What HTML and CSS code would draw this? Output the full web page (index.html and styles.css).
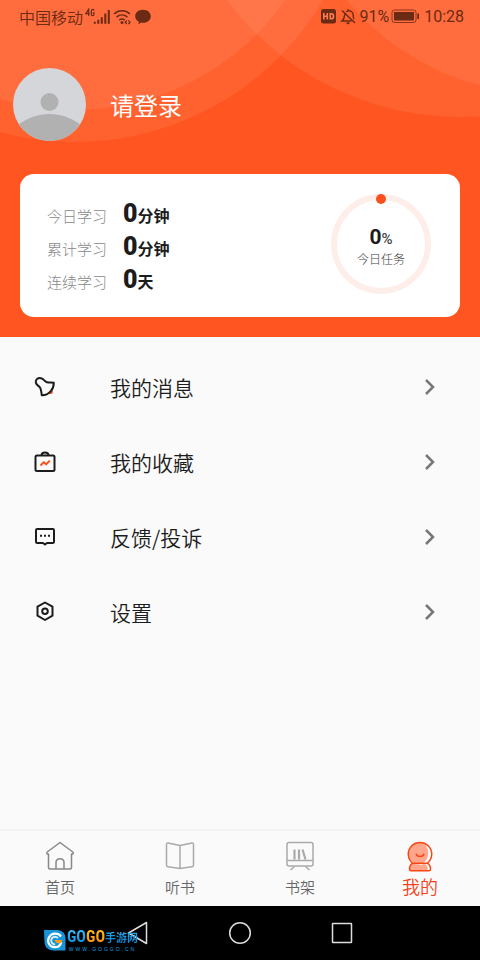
FILE: index.html
```html
<!DOCTYPE html>
<html lang="zh-CN">
<head>
<meta charset="utf-8">
<meta name="viewport" content="width=device-width, initial-scale=1">
<title>我的</title>
<link rel="stylesheet" href="styles.css">
</head>
<body>
<header class="hero">
  <svg class="hero-bg" viewBox="0 0 480 337" preserveAspectRatio="xMidYMin slice" aria-hidden="true">
    <g fill="#fff" fill-opacity=".07">
      <circle cx="75" cy="-146" r="288"/>
      <circle cx="75" cy="-146" r="256"/>
      <circle cx="460" cy="-174" r="291"/>
      <circle cx="545" cy="-162" r="256"/>
    </g>
  </svg>
  <div class="status">
    <div class="status-side">
      <span class="carrier">中国移动</span>
      <svg width="68" height="18" viewBox="0 0 68 18" fill="none" stroke="#6b2a14" aria-hidden="true">
        <path stroke-width="1.2" d="M3.7 8V1.2L.8 5.6h4M9 2.8C9 .8 6.4.8 6.4 2.8v3.4c0 2 2.6 2 2.6 0V4.800H7.800"/>
        <path stroke-width="2" d="M9.800 15.800v-2M13.300 15.800v-4M16.800 15.800V9.300M20.300 15.800V5.500M23.800 15.800V2"/>
        <path stroke-width="1.600" d="M29 6c4.500-4.300 11.500-4.300 16 0M31.600 9.200c3.200-3 7.600-3 10.800 0M34.300 12.200c1.700-1.500 3.700-1.500 5.400 0"/>
        <circle cx="37" cy="14.400" r="1.500" fill="#6b2a14" stroke="none"/>
        <path stroke-width="1.200" d="m41.800 12.400-1.600 1.800 1.600 1.800M43.400 12.400l1.600 1.800-1.600 1.800"/>
        <path fill="#6b2a14" stroke="none" d="M58 1.800c4.500 0 7.800 2.800 7.800 6.400S62.500 14.800 58 14.800c-.6 0-1.200 0-1.800-.2-.8.800-2 1.400-3.200 1.400.6-.7.900-1.500.9-2.300-2.300-1.200-3.700-3.100-3.700-5.500 0-3.600 3.300-6.400 7.800-6.400Z"/>
      </svg>
    </div>
    <div class="status-side">
      <svg width="36" height="18" viewBox="0 0 36 18" fill="none" aria-hidden="true">
        <rect x="0" y="1" width="15" height="14.500" rx="2.500" fill="#6b2a14"/>
        <path stroke="#ff7a50" stroke-width="1.600" d="M2.800 5v6.500M6.300 5v6.500M2.800 8.200h3.500M9.300 5.700v5.100h.9c3.200 0 3.200-5.100 0-5.100Z"/>
        <g stroke="#6b2a14" stroke-width="1.400"><path d="M21 2.500 34 15M23.800 6C23.300 9.500 23.300 11.500 21 13h9.500M25.200 3.700c3.500-2.500 7 .2 7 3.300 0 2 .2 3 .7 4.200M27 2.100V1.200"/><path stroke-width="1.800" d="M25.600 15.200h2.800"/></g>
      </svg>
      <span class="latin">91%</span>
      <svg width="29" height="18" viewBox="0 0 29 18" fill="none" aria-hidden="true">
        <rect x="1" y="2" width="24" height="12.500" rx="2.500" stroke="#6b2a14" stroke-opacity=".8"/>
        <path fill="#6b2a14" d="M3 4h20v8.500H3zM26.300 5.500H28v5.500h-1.700z"/>
      </svg>
      <span class="latin">10:28</span>
    </div>
  </div>
  <a class="profile" href="#login">
    <svg width="73" height="73" viewBox="0 0 73 73" aria-hidden="true">
      <clipPath id="face"><circle cx="36.500" cy="36.500" r="36.500"/></clipPath>
      <g clip-path="url(#face)"><path fill="#d5d6d9" d="M0 0h73v73H0z"/><circle cx="36.500" cy="34" r="9" fill="#b1b1b2"/><circle cx="36.500" cy="97" r="51" fill="#b1b1b2"/></g>
    </svg>
    <span>请登录</span>
  </a>
  <section class="card">
    <dl class="stats">
      <div><dt>今日学习</dt><dd><b>0</b>分钟</dd></div>
      <div><dt>累计学习</dt><dd><b>0</b>分钟</dd></div>
      <div><dt>连续学习</dt><dd><b>0</b>天</dd></div>
    </dl>
    <div class="ring">
      <div class="percent"><b>0</b>%</div>
      <div class="task">今日任务</div>
    </div>
  </section>
</header>
<main class="menu">
  <a href="#messages">
    <svg class="icon" viewBox="0 0 24 24" aria-hidden="true"><path class="accent" d="m15 17.500 4-3c1.300 1.500 1.300 4-.7 4.500-1.200.3-2.300 0-3.300-1.500Z"/><path class="body" d="M2.800 7.500C2.300 4.500 5 2.500 8 3.200c3 .7 3.500 3.300 6 4 2 .6 4 .2 6.800.6C21 14 16 20.500 8.800 20.300 8.200 17.500 8.600 15 7 12.500 5.800 10.800 3.200 10 2.800 7.500Z"/></svg>
    <span>我的消息</span>
    <svg class="chevron" viewBox="0 0 12 18" aria-hidden="true"><path d="m2 2 7 7-7 7"/></svg>
  </a>
  <a href="#favorites">
    <svg class="icon" viewBox="0 0 24 24" aria-hidden="true"><rect x="2.500" y="5.500" width="19" height="15.500" rx="1.500"/><path d="M8.500 5.500C8.500 1.500 15.500 1.500 15.500 5.500"/><path class="mark" d="m7.500 15.500 3.300-3.400 2.400 2.300 3.500-3.800"/></svg>
    <span>我的收藏</span>
    <svg class="chevron" viewBox="0 0 12 18" aria-hidden="true"><path d="m2 2 7 7-7 7"/></svg>
  </a>
  <a href="#feedback">
    <svg class="icon" viewBox="0 0 24 24" aria-hidden="true"><path d="M4.200 4h15.600q1.200 0 1.200 1.200v11.600q0 1.200-1.200 1.200H14l-2 1.500-2-1.500H4.200Q3 18 3 16.800V5.200Q3 4 4.200 4Z"/><path d="M7 10.800h2M11 10.800h2M15 10.800h2"/></svg>
    <span>反馈/投诉</span>
    <svg class="chevron" viewBox="0 0 12 18" aria-hidden="true"><path d="m2 2 7 7-7 7"/></svg>
  </a>
  <a href="#settings">
    <svg class="icon" viewBox="0 0 24 24" aria-hidden="true"><path d="m12 2.500 7.500 4.200v9L12 20l-7.500-4.300v-9Z"/><circle cx="12" cy="11.200" r="2.800"/></svg>
    <span>设置</span>
    <svg class="chevron" viewBox="0 0 12 18" aria-hidden="true"><path d="m2 2 7 7-7 7"/></svg>
  </a>
</main>
<nav class="tabs">
  <a href="#home">
    <svg viewBox="0 0 32 32" aria-hidden="true"><path d="M4.500 14H3.200q-1-1 0-2L16 2.500 28.800 12q1 1 0 2h-1.300v13.500q0 1.500-1.500 1.500H6q-1.500 0-1.500-1.500Z"/><path d="M12 29v-6.500c0-5 8-5 8 0V29"/></svg>
    <span>首页</span>
  </a>
  <a href="#listen">
    <svg class="light" viewBox="0 0 32 32" aria-hidden="true"><path d="M16 5.500 4 3q-1.500-.2-1.500 1.300v21q0 1.300 1.500 1.500l12 1.700 12-1.700q1.500-.2 1.500-1.500v-21Q29.500 2.800 28 3ZM16 5.500v23"/></svg>
    <span>听书</span>
  </a>
  <a href="#shelf">
    <svg class="light" viewBox="0 0 32 32" aria-hidden="true"><rect x="3" y="2.500" width="26" height="23.500" rx="2"/><path d="M3 20.500h26M10.500 26.500 6.500 30M21.500 26.500l4 3.500"/><path stroke-width="2.200" d="M10.500 9.500v10M15 9.500v10M18.500 9.500l3 10"/></svg>
    <span>书架</span>
  </a>
  <a class="active" href="#mine" aria-current="page">
    <svg viewBox="0 0 32 32" aria-hidden="true"><path fill="#fff" stroke="none" d="M7.500 24h17l2 6h-21Z"/><path class="fill" d="M7 24h14c2.500 1.500 3 4 2.500 6.500H5.500c-.5-2.500 0-5 1.500-6.500Z"/><circle cx="16" cy="13.200" r="11.500" fill="#fff" stroke="none"/><ellipse class="fill" cx="14.500" cy="13.200" rx="9.800" ry="11.200"/><path d="M8.800 23.300a11.700 11.700 0 1 1 14.400 0M8.500 23.300h15c2 1 3 3.500 3 6q0 1.500-1.500 1.500H7q-1.500 0-1.500-1.500c0-2.500 1-5 3-6ZM12 13.800c1.200 3.600 6.800 3.600 8 0"/></svg>
    <span>我的</span>
  </a>
</nav>
<footer class="system">
  <button type="button" aria-label="返回"><svg viewBox="0 0 24 24" aria-hidden="true"><path d="M20.500 1.500v21L2.500 12Z"/></svg></button>
  <button type="button" aria-label="主屏幕"><svg viewBox="0 0 24 24" aria-hidden="true"><circle cx="12" cy="12" r="10.300"/></svg></button>
  <button type="button" aria-label="最近任务"><svg viewBox="0 0 24 24" aria-hidden="true"><rect x="2.500" y="2.500" width="19" height="19" rx=".5"/></svg></button>
  <div class="watermark">
    <svg width="22" height="21" viewBox="0 0 22 21" fill="none" aria-hidden="true">
      <path fill="#1595d8" d="M0 0h14q7 1 7.500 8v12.500H9Q1 20 .5 12Z"/>
      <path stroke="#fff" stroke-width="2.200" d="M17 6.500C14 2.500 7.500 2.800 5 7.300c-2.500 5 .8 9.700 5.500 9.900 3.500.1 6-2 6.700-5"/>
      <path stroke="#d9f2ff" stroke-width="1.800" d="M14 8c-3-2.600-7-.8-6.800 2.800.2 2.500 2 3.700 4 3.500"/>
      <path fill="#ff9a13" d="M10.500 10H18c0 2-.7 3-2 3.500l-4-.7Z"/>
    </svg>
    <div class="brand">
      <div class="brand-name"><span class="blue">GO</span><span class="gold">GO</span><span class="cn">手游网</span></div>
      <div class="brand-url">WWW.GOGGO.CN</div>
    </div>
  </div>
</footer>
</body>
</html>
```
FILE: styles.css
```css
* { box-sizing: border-box; }

body {
  margin: 0;
  min-height: 100vh;
  display: flex;
  flex-direction: column;
  background: #fafafa;
  color: #1c1c1c;
  font-family: "Noto Sans CJK SC", sans-serif;
}

a { color: inherit; text-decoration: none; }

.hero {
  position: relative;
  padding: 8px 20px 20px;
  overflow: hidden;
  background: #ff5520;
}
.hero-bg { position: absolute; inset: 0; width: 100%; height: 100%; }

.status {
  position: relative;
  display: flex;
  justify-content: space-between;
  margin: 0 -4px 0 -1px;
  height: 18px;
  color: #6b2a14;
  font-size: 16px;
  line-height: 18px;
}
.carrier { font-weight: 350; }
.status-side { display: flex; align-items: center; gap: 2px; }
.latin { font-family: Roboto, sans-serif; }
.status-side .latin:last-child { margin-left: 2px; }

.profile {
  position: relative;
  display: flex;
  align-items: center;
  gap: 24px;
  margin: 42px 0 33px -7px;
  color: #fff;
  font-size: 24px;
}

.card {
  position: relative;
  display: flex;
  justify-content: space-between;
  align-items: flex-start;
  padding: 20px 29px 19px 27px;
  border-radius: 14px;
  background: #fff;
}
.stats { margin: 0; padding-top: 5px; }
.stats div { display: flex; align-items: baseline; gap: 16px; height: 33px; }
.stats dt { color: #888; font-size: 15px; font-weight: 300; line-height: 33px; }
.stats dd { margin: 0; font-size: 16px; font-weight: 700; line-height: 33px; }
.stats b { font-family: Roboto, sans-serif; font-size: 25px; line-height: 24px; }

.ring {
  position: relative;
  display: flex;
  flex-direction: column;
  align-items: center;
  justify-content: center;
  padding-top: 6px;
  width: 100px;
  height: 100px;
  border: 6px solid #fdeee9;
  border-radius: 50%;
}
.ring::before {
  content: "";
  position: absolute;
  top: -6px;
  width: 10px;
  height: 10px;
  border-radius: 50%;
  background: #fa4f1e;
}
.percent { font: 500 15px/22px Roboto, sans-serif; color: #444; }
.percent b { font-size: 21px; color: #1c1c1c; }
.task { color: #444; font-size: 12px; font-weight: 300; line-height: 18px; }

.menu { flex: 1; padding: 12px 44px 0 33px; }
.menu a { display: flex; align-items: center; height: 75px; font-size: 21px; font-weight: 350; }
.menu span { flex: 1; margin-left: 53px; }
.icon { width: 24px; height: 24px; fill: none; stroke: #1c1c1c; stroke-width: 2; stroke-linejoin: round; }
.icon .accent { fill: #fa4f1e; stroke: none; }
.icon .body { fill: #fafafa; }
.icon .mark { stroke: #fa4f1e; }
.chevron { width: 12px; height: 18px; fill: none; stroke: #777; stroke-width: 2.5; }

.tabs {
  display: grid;
  grid-template-columns: repeat(4, 1fr);
  height: 77px;
  border-top: 2px solid #f3f3f3;
}
.tabs a {
  display: flex;
  flex-direction: column;
  align-items: center;
  padding-top: 9px;
  color: #666;
  font-size: 15px;
  font-weight: 350;
  line-height: 30px;
}
.tabs svg { width: 32px; height: 32px; fill: none; stroke: #888; stroke-width: 1.5; stroke-linejoin: round; }
.tabs svg.light { stroke: #aaa; }
.tabs .active { color: #f5421a; font-size: 18px; line-height: 28px; }
.tabs .active svg { stroke: #fa4612; }
.tabs .active .fill { fill: #ffa68c; stroke: none; }

.system {
  position: relative;
  display: flex;
  justify-content: center;
  align-items: center;
  gap: 78px;
  height: 54px;
  background: #000;
}
.system button { width: 24px; height: 24px; padding: 0; border: 0; background: none; }
.system button svg { display: block; fill: none; stroke: #ddd; stroke-width: 1.5; stroke-linejoin: round; }

.watermark { position: absolute; left: 44px; bottom: 8px; display: flex; align-items: center; gap: 1px; }
.brand { display: flex; flex-direction: column; align-items: center; }
.brand-name { display: flex; font: 700 16px/18px "Liberation Sans Narrow", "Roboto Condensed", "Liberation Sans", sans-serif; }
.brand-name span { color: transparent; background-clip: text; }
.brand-name .blue { background-image: linear-gradient(#35c4fa, #0a80d8); }
.brand-name .gold { background-image: linear-gradient(#ffc21c, #ff8508); }
.brand-name .cn { font-family: "Noto Sans CJK SC", sans-serif; font-size: 11px; background-image: linear-gradient(#29b8f5, #0874ca); }
.brand-url { color: #1aa0e8; font: 5px/6px "Liberation Sans", sans-serif; letter-spacing: 2px; }
```
